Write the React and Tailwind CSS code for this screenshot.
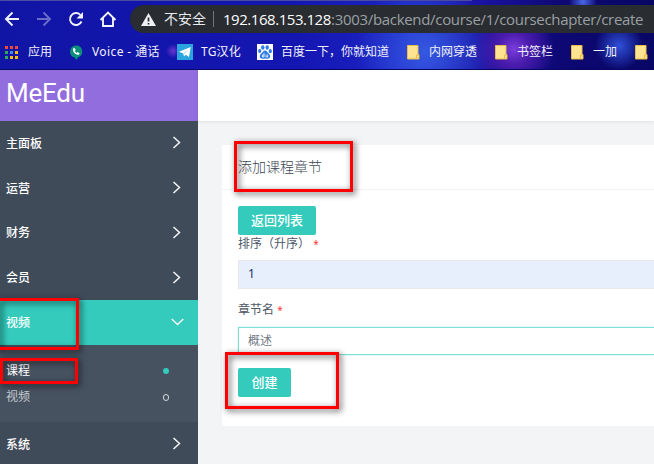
import React from "react";

const cjk = "font-['Noto_Sans','Noto_Sans_CJK_SC',sans-serif]";

function Folder() {
  return (
    <svg width="13" height="15" viewBox="0 0 13 15" className="block shrink-0">
      <path d="M.5.500h10.500v9h1v4.500H.5z" fill="#ffe391" stroke="#e8bd43" />
      <path d="M9.500 13.500V10H12" fill="none" stroke="#e8bd43" />
    </svg>
  );
}

function AppsGrid() {
  const colors = ["#f04a3e", "#f04a3e", "#f04a3e", "#34a853", "#3f8cf5", "#fbbc05", "#34a853", "#fbbc05", "#fbbc05"];
  return (
    <div className="grid grid-cols-3 gap-[2px]">
      {colors.map((c, i) => (
        <i key={i} className="size-[3px]" style={{ background: c }} />
      ))}
    </div>
  );
}

function VoiceIcon() {
  return (
    <svg width="14" height="15" viewBox="0 0 14 15" className="block">
      <path d="M7 .5a6.100 6.100 0 0 1 2 11.900L7.300 15l-1.600-2.500A6.100 6.100 0 0 1 7 .5z" fill="#0b8f7a" />
      <path d="M4 3.500l1.500-.5 1.200 2-.9 1c.4.8 1 1.400 1.900 1.900l.9-.9 1.900 1.200-.5 1.600C6.700 10.200 3.500 7 4 3.500z" fill="#fff" />
    </svg>
  );
}

function TelegramIcon() {
  return (
    <svg width="16" height="16" viewBox="0 0 16 16" className="block">
      <path d="M0 0h16v16H0z" fill="#2ba5df" />
      <path d="M2 7.800L13.700 3 12 13 8.700 10.800 7 12.500 6.200 9.500z" fill="#fff" />
      <path d="M6.300 9.400l4.800-3.800-3.500 4.400" fill="#b9dff2" />
    </svg>
  );
}

function BaiduIcon() {
  return (
    <svg width="16" height="16" viewBox="0 0 16 16" className="block">
      <path d="M0 0h16v16H0z" fill="#fff" />
      <g fill="#2f7ce8">
        <ellipse cx="5.800" cy="3.500" rx="1.700" ry="2.300" />
        <ellipse cx="10.200" cy="3.500" rx="1.700" ry="2.300" />
        <ellipse cx="2.700" cy="7" rx="1.600" ry="2.100" />
        <ellipse cx="13.300" cy="7.200" rx="1.600" ry="2.100" />
        <path d="M8 6.500c1.800 0 2.400 2 4 3.300 2.200 2 1.200 5-1.300 5-1 0-1.700-.3-2.700-.3s-1.700.3-2.700.3c-2.500 0-3.500-3-1.300-5C5.600 8.500 6.200 6.500 8 6.500z" />
      </g>
      <path d="M7 9v4H5.500v-2H7M9 10.500V13h1.700v-2.500" fill="none" stroke="#fff" strokeWidth=".8" />
    </svg>
  );
}

function Bookmark({ icon, text, slot, size = "", gap = "gap-[9px]" }) {
  return (
    <div className={`flex shrink-0 items-center ${slot} ${gap}`}>
      {icon}
      <span className={`whitespace-nowrap ${size}`}>{text}</span>
    </div>
  );
}

function BrowserChrome() {
  return (
    <header className="h-[70px] shrink-0 overflow-hidden border-b border-[#080866] bg-[radial-gradient(circle_at_173px_51px,#6a35d0_0,transparent_7px),radial-gradient(circle_at_514px_49px,#7a3ddc_0,#4a1bac_16px,transparent_40px),radial-gradient(circle_at_619px_46px,#2f50d8_0,transparent_24px),radial-gradient(circle_at_583px_2px,#4a68e8_0,transparent_14px),radial-gradient(circle_at_425px_52px,#3558e2_0,transparent_70px),linear-gradient(90deg,#1115a5_0,#1416b1_45%,#1c24c4_62%,#1a12a0_74%,#0d0873_86%,#080765_100%)]">
      <div className="h-px w-[472px] bg-[#4b4b9f]" />
      <div className="mt-1 flex h-7 items-center">
        <div className="flex w-[130px] shrink-0 items-center pl-1">
          <svg width="120" height="24" viewBox="4 7 120 24" fill="none" stroke="#f1f3fb" strokeWidth="1.900">
            <path d="M19 19H6.500M12.500 12.500L6 19l6.500 6.500" />
            <path d="M37 19h12.500M43.500 12.500L50 19l-6.500 6.500" stroke="#6a6cca" />
            <path d="M81.500 21.500a6 6 0 1 1-1.200-6.700" />
            <path d="M83 12v6.500H76.500z" fill="#f1f3fb" stroke="none" />
            <path d="M103 18v8h10v-8M100.500 20l7.500-7.500 7.500 7.500" />
          </svg>
        </div>
        <div className="flex h-7 flex-1 items-center rounded-l-full bg-[#292c30] pl-[11px]">
          <svg width="15" height="13" viewBox="0 0 15 13" className="shrink-0">
            <path d="M7.500 0L15 13H0z" fill="#f0f1f2" />
            <path d="M7.500 4.500v4M7.500 10v1.500" stroke="#292c30" strokeWidth="1.700" />
          </svg>
          <span className={`ml-2 w-[43px] shrink-0 whitespace-nowrap text-[14px] leading-5 text-[#e8eaed] ${cjk}`}>不安全</span>
          <span className="ml-[6px] h-4 w-px shrink-0 bg-[#74777a]" />
          <span className="ml-[9px] whitespace-nowrap font-['Open_Sans'] text-[15px] leading-5 text-[#9aa0a6]">
            <span className="inline-block w-[108px] tracking-[-0.460px] text-white">192.168.153.128</span>
            <span className="tracking-[-0.310px]">:3003/backend/course/1/coursechapter/create</span>
          </span>
        </div>
      </div>
      <div className={`flex h-9 items-center pl-[5px] pt-[2px] text-[12px] text-[#f0f0fa] ${cjk}`}>
        <Bookmark slot="w-[64px]" gap="gap-[10px]" icon={<AppsGrid />} text="应用" />
        <Bookmark slot="w-[108px]" icon={<VoiceIcon />} text="Voice - 通话" size="tracking-[0.400px]" />
        <Bookmark slot="w-[80px]" gap="gap-2" icon={<TelegramIcon />} text="TG汉化" size="tracking-[0.200px]" />
        <Bookmark slot="w-[150px]" gap="gap-2" icon={<BaiduIcon />} text="百度一下，你就知道" />
        <Bookmark slot="w-[88px]" icon={<Folder />} text="内网穿透" />
        <Bookmark slot="w-[76px]" icon={<Folder />} text="书签栏" />
        <Bookmark slot="w-[64px]" icon={<Folder />} text="一加" />
        <Folder />
      </div>
    </header>
  );
}

function MenuItem({ text, open }) {
  return (
    <div className={`flex shrink-0 items-center justify-between pl-[6px] ${open ? "h-[45px] bg-[#34cbbd] pr-[14px]" : "h-[44.750px] pr-[17px]"}`}>
      <span className="pt-px text-[12px] font-medium leading-4">{text}</span>
      <svg width={open ? 13 : 9} height={open ? 8 : 13} fill="none" stroke="#f4f6f7" strokeWidth="1.500" className="mb-px">
        <path d={open ? "M.7 1l5.800 5.500L12.300 1" : "M1.500 1L7.500 6.500l-6 5.500"} />
      </svg>
    </div>
  );
}

function Sidebar() {
  return (
    <aside className={`flex w-[198px] shrink-0 flex-col overflow-hidden bg-[#404b5a] text-white ${cjk}`}>
      <div className="h-[51px] shrink-0 bg-[#926dde] pl-[6px] pt-[4px] font-[Roboto] text-[26px] leading-[38px] tracking-[-0.250px]">MeEdu</div>
      <MenuItem text="主面板" />
      <MenuItem text="运营" />
      <MenuItem text="财务" />
      <MenuItem text="会员" />
      <MenuItem text="视频" open />
      <div className="h-[77px] shrink-0 bg-[#475261] pl-[6px] pr-[29px] pt-[13px] text-[12px]">
        <div className="flex h-[26px] items-center justify-between">
          <span>课程</span>
          <i className="size-[6px] rounded-full bg-[#34cbbd]" />
        </div>
        <div className="flex h-[26px] items-center justify-between text-[#c4c9cf]">
          <span>视频</span>
          <i className="h-[7px] w-[6px] rounded-full border border-[#d5d9dd]" />
        </div>
      </div>
      <MenuItem text="系统" />
    </aside>
  );
}

function Label({ text }) {
  return (
    <div className="whitespace-nowrap pt-px text-[12px] leading-4 text-[#4c5667]">
      {text} <span className="text-[10px] text-[#f33]">*</span>
    </div>
  );
}

function Main() {
  return (
    <main className={`flex min-w-0 flex-1 flex-col bg-[#f3f4f6] ${cjk}`}>
      <div className="h-[51px] shrink-0 bg-white shadow-[0_1px_3px_rgba(0,0,0,0.080)]" />
      <section className="ml-6 mt-6 h-[281px] rounded-l-[2px] bg-white">
        <h1 className="h-[45px] border-b border-[#f3f3f4] pl-4 text-[14px] font-light leading-[44px] text-[#3c4655]">添加课程章节</h1>
        <div className="pl-4 pt-4">
          <button className="block h-[29px] w-[78px] rounded-[2px] bg-[#34cbbd] pb-[2px] text-[13px] font-medium leading-[26px] text-white">返回列表</button>
          <Label text="排序（升序）" />
          <div className="mt-2 h-[29px] border border-r-0 border-[#e6e8ec] bg-[#e8effc] pl-[9px] text-[12px] leading-[26px] text-[#12356b]">1</div>
          <div className="mt-3">
            <Label text="章节名" />
          </div>
          <div className="mt-[9px] h-7 border border-r-0 border-[#7ddfd5] pl-[9px] text-[12px] leading-[26px] text-[#747b86] shadow-[0_0_2px_#b4eee8]">概述</div>
          <button className="mt-[13px] block h-[29px] w-[53px] rounded-[2px] bg-[#34cbbd] pb-[2px] text-[13px] font-medium leading-[26px] text-white">创建</button>
        </div>
      </section>
    </main>
  );
}

function Marker({ place }) {
  return <div className={`pointer-events-none absolute border-[3px] border-[#fe0000] drop-shadow-[2px_2px_3px_rgba(0,0,0,0.700)] ${place}`} />;
}

export default function App() {
  return (
    <div className="relative flex h-[464px] w-[654px] flex-col overflow-hidden">
      <BrowserChrome />
      <div className="flex min-h-0 flex-1">
        <Sidebar />
        <Main />
      </div>
      <Marker place="left-[234px] top-[141px] h-[51px] w-[119px]" />
      <Marker place="-left-[3px] top-[298px] h-[52px] w-[82px]" />
      <Marker place="left-0 top-[358px] h-[26px] w-[78px]" />
      <Marker place="left-[225px] top-[352px] h-[57px] w-[114px]" />
    </div>
  );
}
